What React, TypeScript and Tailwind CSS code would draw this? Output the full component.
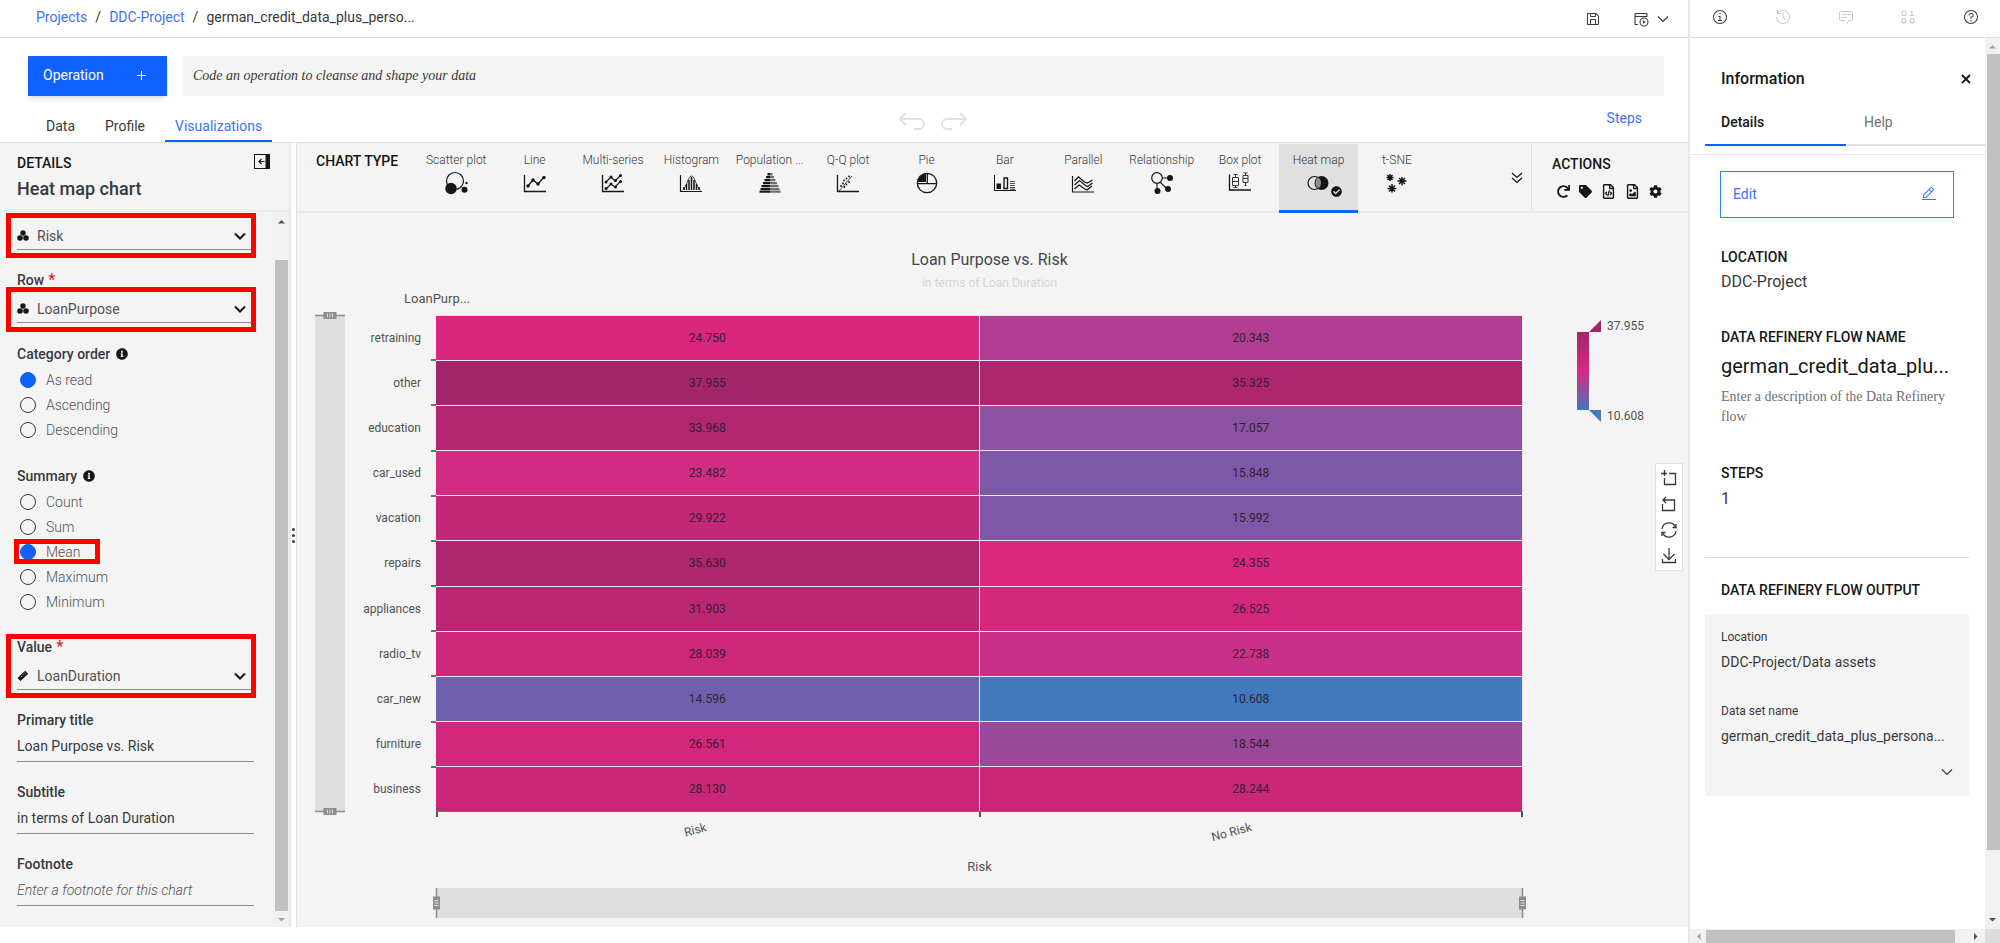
import React from "react";
import {
  FaCheckCircle,
  FaInfoCircle,
  FaRedo,
  FaTag,
  FaRegFileCode,
  FaRegFileImage,
  FaCog,
} from "react-icons/fa";

type Row = { name: string; values: [number, number] };

const rows: Row[] = [
  { name: "retraining", values: [24.75, 20.343] },
  { name: "other", values: [37.955, 35.325] },
  { name: "education", values: [33.968, 17.057] },
  { name: "car_used", values: [23.482, 15.848] },
  { name: "vacation", values: [29.922, 15.992] },
  { name: "repairs", values: [35.63, 24.355] },
  { name: "appliances", values: [31.903, 26.525] },
  { name: "radio_tv", values: [28.039, 22.738] },
  { name: "car_new", values: [14.596, 10.608] },
  { name: "furniture", values: [26.561, 18.544] },
  { name: "business", values: [28.13, 28.244] },
];

const MIN = 10.608;
const MAX = 37.955;
const stops = [
  [65, 120, 190],
  [219, 39, 128],
  [163, 38, 108],
];

function heat(v: number) {
  const t = ((v - MIN) / (MAX - MIN)) * 2;
  const i = t >= 1 ? 1 : 0;
  const f = t - i;
  const c = stops[i].map((a, k) => Math.round(a + (stops[i + 1][k] - a) * f));
  return `rgb(${c.join(",")})`;
}

/* ---------- Icons ---------- */

const Carbon = ({ size = 16, children }: { size?: number; children: React.ReactNode }) => (
  <svg width={size} height={size} viewBox="0 0 32 32" fill="currentColor" aria-hidden="true">
    {children}
  </svg>
);

const SaveIcon = () => (
  <Carbon>
    <path d="M27.71,9.29l-5-5A1,1,0,0,0,22,4H6A2,2,0,0,0,4,6V26a2,2,0,0,0,2,2H26a2,2,0,0,0,2-2V10A1,1,0,0,0,27.71,9.29ZM12,6h8v4H12Zm8,20H12V18h8Zm2,0V18a2,2,0,0,0-2-2H12a2,2,0,0,0-2,2v8H6V6h4v4a2,2,0,0,0,2,2h8a2,2,0,0,0,2-2V6.41l4,4V26Z" />
  </Carbon>
);

const JobIcon = () => (
  <svg width="16" height="16" viewBox="0 0 32 32" fill="none" stroke="currentColor" strokeWidth="2.2" aria-hidden="true">
    <path d="M28 12V6a1 1 0 0 0-1-1H5a1 1 0 0 0-1 1v20a1 1 0 0 0 1 1h5M4 11h24" />
    <circle cx="22" cy="22" r="8" />
    <path d="M20 18.5v7l5.5-3.5z" fill="currentColor" stroke="none" />
  </svg>
);

const InfoIcon = () => (
  <Carbon>
    <path d="M17 22V14H13v2h2v6H12v2h8V22zM16 8a1.5 1.5 0 1 0 1.5 1.5A1.5 1.5 0 0 0 16 8z" />
    <path d="M16 30A14 14 0 1 1 30 16 14 14 0 0 1 16 30Zm0-26A12 12 0 1 0 28 16 12 12 0 0 0 16 4Z" />
  </Carbon>
);

const HistoryIcon = () => (
  <Carbon>
    <path d="M20.59 22 15 16.41 15 7 17 7 17 15.58 22 20.59z" />
    <path d="M16,2A13.94,13.94,0,0,0,6,6.23V2H4v8h8V8H7.08A12,12,0,1,1,4,16H2A14,14,0,1,0,16,2Z" />
  </Carbon>
);

const CommentIcon = () => (
  <svg width="16" height="16" viewBox="0 0 32 32" fill="none" stroke="currentColor" strokeWidth="2" aria-hidden="true">
    <path d="M17.5 29.5 21 23h6a2 2 0 0 0 2-2V7a2 2 0 0 0-2-2H5a2 2 0 0 0-2 2v14a2 2 0 0 0 2 2h10M8 11h16M8 17h10" />
  </svg>
);

const DataIcon = () => (
  <svg width="16" height="16" viewBox="0 0 32 32" fill="none" stroke="currentColor" strokeWidth="2.2" aria-hidden="true">
    <rect x="4" y="4" width="8" height="9" rx="4" />
    <rect x="4" y="19" width="8" height="9" rx="4" />
    <rect x="20" y="19" width="8" height="9" rx="4" />
    <path d="M20 5h4v8M20 13h8" />
  </svg>
);

const HelpIcon = () => (
  <Carbon>
    <path d="M16,2A14,14,0,1,0,30,16,14,14,0,0,0,16,2Zm0,26A12,12,0,1,1,28,16,12,12,0,0,1,16,28Z" />
    <circle cx="16" cy="23.5" r="1.5" />
    <path d="M17,8H15.5A4.49,4.49,0,0,0,11,12.5V13h2v-.5A2.5,2.5,0,0,1,15.5,10H17a2.5,2.5,0,0,1,0,5H15v4.5h2V17a4.5,4.5,0,0,0,0-9Z" />
  </Carbon>
);

const EditIcon = () => (
  <Carbon>
    <path d="M2 26H30V28H2z" />
    <path d="M25.4,9c0.8-0.8,0.8-2,0-2.8l-3.6-3.6c-0.8-0.8-2-0.8-2.8,0L4,17.6V24h6.4L25.4,9z M20.4,4L24,7.6l-3,3L17.4,7L20.4,4z M6,22v-3.6l10-10l3.6,3.6l-10,10H6z" />
  </Carbon>
);

const Chevron = ({ bold = false }: { bold?: boolean }) => (
  <svg width="12" height="8" viewBox="0 0 12 8" fill="none" stroke="currentColor" strokeWidth={bold ? 2 : 1.2} aria-hidden="true">
    <path d="M1 1.5 6 6.5 11 1.5" />
  </svg>
);

const CollapseIcon = () => (
  <svg width="16" height="15" viewBox="0 0 16 15" fill="none" stroke="#161616" aria-hidden="true">
    <rect x=".5" y=".5" width="15" height="14" />
    <path d="M11.5 0h4v15h-4z" fill="#161616" stroke="none" />
    <path d="M10.5 7.5H5M7.5 5 5 7.5 7.5 10" strokeWidth="1.2" />
  </svg>
);

const BlobsIcon = () => (
  <svg width="12" height="11" viewBox="0 0 12 11" fill="#161616" aria-hidden="true">
    <circle cx="6" cy="3" r="2.7" />
    <circle cx="3" cy="8" r="2.8" />
    <circle cx="9" cy="8" r="2.8" />
  </svg>
);

const RulerIcon = () => (
  <svg width="12" height="12" viewBox="0 0 12 12" aria-hidden="true">
    <path d="M.5 8 8.2.8l3 3L3.5 11z" fill="#161616" />
    <path d="m4 6 1 1M5.8 4.3l1 1M7.6 2.6l1 1" stroke="#f4f4f4" strokeWidth=".7" />
  </svg>
);

const UndoIcon = () => (
  <svg width="26" height="18" viewBox="0 0 26 18" fill="none" stroke="currentColor" strokeWidth="1.8" aria-hidden="true">
    <path d="M7 1 1 7l6 6M1 7h19a5 5 0 0 1 0 10h-5" />
  </svg>
);

const RedoIcon = () => (
  <svg width="26" height="18" viewBox="0 0 26 18" fill="none" stroke="currentColor" strokeWidth="1.8" aria-hidden="true">
    <path d="m19 1 6 6-6 6M25 7H6a5 5 0 0 0 0 10h5" />
  </svg>
);

const K = "#161616";

const chartIcons: Record<string, React.ReactNode> = {
  "Scatter plot": (
    <>
      <circle cx="11" cy="10" r="8.5" fill="none" stroke={K} strokeWidth="1.2" />
      <circle cx="7" cy="17.5" r="5.7" fill={K} />
      <circle cx="20.5" cy="18.7" r="3" fill={K} />
      <circle cx="22.5" cy="12" r="1.2" fill={K} />
    </>
  ),
  Line: (
    <g fill="none" stroke={K}>
      <path d="M1.5 4v16.5H23" strokeWidth="1.3" />
      <path d="m5 15 5-6 5 4 6-7" strokeWidth="1.3" />
      <g fill={K} stroke="none">
        <circle cx="5" cy="15" r="1.7" />
        <circle cx="10" cy="9" r="1.7" />
        <circle cx="15" cy="13" r="1.7" />
        <circle cx="21" cy="6.5" r="1.7" />
      </g>
    </g>
  ),
  "Multi-series": (
    <g fill="none" stroke={K}>
      <path d="M1.5 4v16.5H23" strokeWidth="1.3" />
      <path d="m5 11 5-5 4 4 6-6M5 18l5-5 4 3 6-6" strokeWidth="1.2" />
      <g fill={K} stroke="none">
        <circle cx="5" cy="11" r="1.5" />
        <circle cx="10" cy="6" r="1.5" />
        <circle cx="14.5" cy="9.5" r="1.5" />
        <circle cx="19.5" cy="4.5" r="1.5" />
        <circle cx="5" cy="17.5" r="1.5" />
        <circle cx="10" cy="13" r="1.5" />
        <circle cx="14.5" cy="16" r="1.5" />
        <circle cx="19.5" cy="10.5" r="1.5" />
      </g>
    </g>
  ),
  Histogram: (
    <g fill="none" stroke={K}>
      <path d="M1.5 4v16.5H23" strokeWidth="1.2" />
      <path d="M5 19v-3M7.5 19v-6M10 19V9M12.5 19V6M15 19V9M17.5 19v-6M20 19v-3" strokeWidth="1.5" />
      <path d="M3.5 19C8 16 9 5 12.5 5S17 16 21.5 19" strokeWidth=".8" />
    </g>
  ),
  "Population ...": (
    <>
      <path d="M9.5 2H12v2.5H9.5zM8 5h4v2.3H8zM6.5 8H12v2.3H6.5zM5 11h7v2.3H5zM3.5 14H12v2.3H3.5zM2.5 17H12v2H2.5zM1.5 19.5H12v2.3H1.5z" fill={K} />
      <path d="M12 2h2.5v2.5H12zM12 5h4v2.3h-4zM12 8h5.5v2.3H12zM12 11h7v2.3h-7zM12 14h8.5v2.3H12zM12 17h9.5v2H12zM12 19.5h10.5v2.3H12z" fill="#6f6f6f" />
    </>
  ),
  "Q-Q plot": (
    <g fill="none" stroke={K}>
      <path d="M1.5 4v16.5H23" strokeWidth="1.3" />
      <path d="M3 20 16 5" strokeWidth=".8" />
      <g fill={K} stroke="none">
        <circle cx="5" cy="15" r=".9" />
        <circle cx="7" cy="12.5" r=".9" />
        <circle cx="8" cy="9.5" r=".9" />
        <circle cx="10.5" cy="7.5" r=".9" />
        <circle cx="13" cy="5.5" r=".9" />
        <circle cx="8.5" cy="16" r=".9" />
        <circle cx="10.5" cy="13.5" r=".9" />
        <circle cx="13" cy="11" r=".9" />
      </g>
    </g>
  ),
  Pie: (
    <>
      <circle cx="12" cy="12" r="9.7" fill="none" stroke={K} strokeWidth="1.3" />
      <path d="M11 11H2.5A9.5 9.5 0 0 1 11 2.5z" fill={K} />
      <path d="M12.3 2.5V13M2 12.7h20" stroke={K} strokeWidth="1.3" />
    </>
  ),
  Bar: (
    <>
      <path d="M1.5 4v15.5H23" fill="none" stroke={K} />
      <path d="M3.5 12.5H8V18H3.5z" fill={K} />
      <path d="M11 7h3.5v10.5H11z" fill="none" stroke={K} strokeWidth="1.4" />
      <path d="M17 10.5h5M17 12.5h5M17 14.5h5M17 16.5h5M17 18.2h5" stroke="#525252" strokeWidth="1.2" />
    </>
  ),
  Parallel: (
    <g fill="none" stroke={K}>
      <path d="M1.5 5v16H23" strokeWidth="1.2" />
      <path d="m3.5 10 4-4 6 5 3 1 5-3M3.5 14l5-4.5 6 5 2 1 5-3.5M3.5 18 8 14l6 4 2 1 5-4" strokeWidth="1.3" />
    </g>
  ),
  Relationship: (
    <>
      <path d="M11 7h8M10 11l7 7M7 12v8" stroke={K} strokeWidth="1.1" />
      <circle cx="7" cy="7" r="5.3" fill="#f4f4f4" stroke={K} strokeWidth="1.2" />
      <circle cx="20" cy="7" r="3" fill={K} />
      <circle cx="18" cy="18" r="3" fill={K} />
      <circle cx="7.5" cy="20" r="3" fill={K} />
    </>
  ),
  "Box plot": (
    <g fill="none" stroke="#393939">
      <path d="M1.5 3.5v15.5H23" strokeWidth="1.3" stroke={K} />
      <path d="M4.5 6.5h6v8h-6zM4.5 10.5h6M7.5 3.5v3M7.5 14.5v2M5.5 3.5h4M5.5 16.5h4" />
      <path d="M15 4.5h5v7h-5zM15 7.5h5M17.5 2v2.5M17.5 11.5v3M15.5 2h4M16.5 14.5h2" />
    </g>
  ),
  "Heat map": (
    <>
      <circle cx="8.5" cy="12" r="6.5" fill="none" stroke={K} strokeWidth="1.2" />
      <circle cx="15.5" cy="12" r="7" fill={K} />
      <path d="M12 6.5a6.5 6.5 0 0 1 0 11 7 7 0 0 1 0-11z" fill="#8d8d8d" />
    </>
  ),
  "t-SNE": (
    <g stroke={K} strokeWidth="1.5" fill={K}>
      <path d="M5 3v7M1.5 6.5h7M2.5 4l5 5M7.5 4l-5 5M17 6v8.5M12.5 10h9M14 7l6 6M20 7l-6 6M7 13v8.5M2.5 17.5h9M4 14.5l6 6M10 14.5l-6 6" />
    </g>
  ),
};

/* ---------- Left panel ---------- */

const Heading = ({ children, required, info, htmlFor }: { children: React.ReactNode; required?: boolean; info?: boolean; htmlFor?: string }) => {
  const inner = (
    <>
      {children}
      {required && <span className="text-base leading-5 text-[#da1e28]">*</span>}
      {info && <FaInfoCircle size={12} className="ml-0.5 text-[#161616]" />}
    </>
  );
  const cls = "flex h-5 items-center gap-1 text-sm font-medium text-[#343a3f]";
  return htmlFor ? <label htmlFor={htmlFor} className={cls}>{inner}</label> : <legend className={cls}>{inner}</legend>;
};

const Select = ({ id, value, icon, label }: { id: string; value: string; icon: React.ReactNode; label?: string }) => (
  <div className="relative border-b border-[#8d8d8d]">
    <span className="absolute top-4 left-0">{icon}</span>
    <select id={id} aria-label={label} className="block h-[35px] w-full appearance-none bg-transparent pt-2 pl-5 text-sm text-[#525252] outline-none">
      <option>{value}</option>
    </select>
    <span className="pointer-events-none absolute top-[18px] right-2 text-[#161616]">
      <Chevron bold />
    </span>
  </div>
);

const Mark = ({ className }: { className: string }) => (
  <div aria-hidden="true" className={"pointer-events-none absolute border-[5px] border-[#ff0000] " + className} />
);

const Radios = ({ name, options, selected, marked }: { name: string; options: string[]; selected: string; marked?: string }) => (
  <div className="mt-[3px]">
    {options.map((o) => (
      <label key={o} className="relative flex h-[25px] items-center gap-[10px] pl-[3px] text-sm font-light text-[#525252]">
        <input
          type="radio"
          name={name}
          defaultChecked={o === selected}
          className="size-4 appearance-none rounded-full border border-[#393939] checked:border-[#0f62fe] checked:bg-[#0f62fe]"
        />
        {o}
        {o === marked && <Mark className="-left-[3px] h-[25px] w-[86px]" />}
      </label>
    ))}
  </div>
);

const Field = ({ id, label, value, placeholder }: { id: string; label: string; value?: string; placeholder?: string }) => (
  <div className="mt-5">
    <Heading htmlFor={id}>{label}</Heading>
    <input
      id={id}
      defaultValue={value}
      placeholder={placeholder}
      className="block h-8 w-full border-b border-[#8d8d8d] bg-transparent text-sm text-[#343a3f] outline-none placeholder:font-light placeholder:text-[#525252] placeholder:italic"
    />
  </div>
);

const Arrow = ({ d, color }: { d: string; color: string }) => (
  <svg width="7" height="7" viewBox="0 0 7 7" fill={color} aria-hidden="true">
    <path d={d} />
  </svg>
);
const UP = "M0 5.5 3.5 2 7 5.5z";
const DOWN = "M0 2 3.5 5.5 7 2z";
const LEFT = "M5.5 0 2 3.5 5.5 7z";
const RIGHT = "M2 0 5.5 3.5 2 7z";

const DetailsPanel = () => (
  <section className="flex w-[291px] shrink-0 flex-col border-r-2 border-[#e8e8e8] bg-[#f4f4f4]">
    <header className="flex h-[69px] shrink-0 justify-between border-b-2 border-[#e8e8e8] pt-2.5 pr-[19px] pl-[17px]">
      <div>
        <h2 className="text-sm leading-5 font-medium text-[#161616]">DETAILS</h2>
        <h3 className="mt-1 text-lg leading-6 font-medium text-[#343a3f]">Heat map chart</h3>
      </div>
      <button type="button" aria-label="Collapse panel" className="mt-px self-start">
        <CollapseIcon />
      </button>
    </header>
    <div className="flex min-h-0 flex-1">
      <form className="min-w-0 flex-1 overflow-hidden pt-0.5 pr-[19px] pl-[17px]">
        <div className="relative">
          <Select id="column" label="Column" value="Risk" icon={<BlobsIcon />} />
          <Mark className="-top-[1px] -right-[2px] -bottom-[8px] -left-[11px]" />
        </div>
        <div className="mt-5">
          <Heading required htmlFor="row">Row</Heading>
          <div className="relative -mt-[3px]">
            <Select id="row" value="LoanPurpose" icon={<BlobsIcon />} />
            <Mark className="top-0 -right-[2px] -bottom-[9px] -left-[11px]" />
          </div>
        </div>
        <fieldset className="mt-[21px]">
          <Heading info>Category order</Heading>
          <Radios name="order" options={["As read", "Ascending", "Descending"]} selected="As read" />
        </fieldset>
        <fieldset className="mt-6">
          <Heading info>Summary</Heading>
          <Radios name="summary" options={["Count", "Sum", "Mean", "Maximum", "Minimum"]} selected="Mean" marked="Mean" />
        </fieldset>
        <div className="relative mt-[23px]">
          <Heading required htmlFor="value">Value</Heading>
          <div className="-mt-[3px]">
            <Select id="value" value="LoanDuration" icon={<RulerIcon />} />
          </div>
          <Mark className="-top-[3px] -right-[2px] -bottom-[8px] -left-[11px]" />
        </div>
        <Field id="title" label="Primary title" value="Loan Purpose vs. Risk" />
        <Field id="subtitle" label="Subtitle" value="in terms of Loan Duration" />
        <Field id="footnote" label="Footnote" placeholder="Enter a footnote for this chart" />
      </form>
      <div className="flex w-4 flex-col items-center bg-[#f1f1f1]" aria-hidden="true">
        <div className="flex h-12 flex-col pt-[6px]">
          <Arrow d={UP} color="#505050" />
        </div>
        <div className="w-[13px] flex-1 bg-[#c1c1c1]" />
        <div className="flex h-4 items-center">
          <Arrow d={DOWN} color="#a3a3a3" />
        </div>
      </div>
    </div>
  </section>
);

/* ---------- Chart ---------- */

const ChartTypes = () => (
  <div className="flex h-[69px] shrink-0 border-b-2 border-[#e8e8e8]">
    <h2 className="w-[120px] shrink-0 pt-[9px] pl-[19px] text-sm leading-4 font-medium text-[#161616]">CHART TYPE</h2>
    <div className="flex min-w-0 flex-1">
      {Object.keys(chartIcons).map((name) => (
        <button
          key={name}
          type="button"
          className={
            "relative flex flex-1 basis-0 flex-col items-center border-b-[3px] pt-2 " +
            (name === "Heat map" ? "-mb-0.5 border-[#0f62fe] bg-[#e0e0e0]" : "border-transparent")
          }
        >
          <span className="text-xs leading-4 font-light whitespace-nowrap text-[#393939]">{name}</span>
          <svg width="24" height="24" viewBox="0 0 24 24" className="mt-[3px]" aria-hidden="true">
            {chartIcons[name]}
          </svg>
          {name === "Heat map" && <FaCheckCircle size={11} className="absolute right-4 bottom-[13px] text-[#161616]" />}
        </button>
      ))}
    </div>
    <button type="button" aria-label="More chart types" className="flex w-[95px] items-center justify-end pr-2 text-[#161616]">
      <svg width="12" height="12" viewBox="0 0 12 12" fill="none" stroke="currentColor" strokeWidth="1.2" aria-hidden="true">
        <path d="m1 1 5 4.5L11 1M1 6l5 4.5L11 6" />
      </svg>
    </button>
    <div className="w-[157px] shrink-0 border-l border-[#e0e0e0] pt-3 pl-5">
      <h2 className="text-sm leading-4 font-medium text-[#161616]">ACTIONS</h2>
      <div className="mt-3 ml-[5px] flex items-center gap-[9px] text-[#161616]">
        <button type="button" aria-label="Reset"><FaRedo size={13} /></button>
        <button type="button" aria-label="Tag"><FaTag size={13} /></button>
        <button type="button" aria-label="Export code"><FaRegFileCode size={15} /></button>
        <button type="button" aria-label="Export image"><FaRegFileImage size={15} /></button>
        <button type="button" aria-label="Settings"><FaCog size={13} /></button>
      </div>
    </div>
  </div>
);

const HandleH = () => (
  <svg width="30" height="7" viewBox="0 0 30 7" aria-hidden="true">
    <path d="M0 3.5h30" stroke="#8d8d8d" strokeWidth="1.5" />
    <path d="M8.5 0h13v7h-13z" fill="#8d8d8d" />
    <path d="M12.5 1.5v4M15 1.5v4M17.5 1.5v4" stroke="#dedede" />
  </svg>
);

const HandleV = () => (
  <svg width="7" height="30" viewBox="0 0 7 30" aria-hidden="true">
    <path d="M3.5 0v30" stroke="#8d8d8d" strokeWidth="1.5" />
    <path d="M0 8.5h7v13H0z" fill="#8d8d8d" />
    <path d="M1.5 12.5h4M1.5 15h4M1.5 17.5h4" stroke="#dedede" />
  </svg>
);

const ToolBox = () => (
  <div className="flex w-7 flex-col items-center gap-[10px] border border-[#e0e0e0] bg-white py-1.5 text-[#393939]">
    <button type="button" aria-label="Zoom area">
      <svg width="16" height="16" viewBox="0 0 16 16" fill="none" stroke="currentColor" strokeWidth="1.3" aria-hidden="true">
        <path d="M0 3.5h6M3.5 0v6M8 3.5h6.5v11h-11V8" />
      </svg>
    </button>
    <button type="button" aria-label="Restore zoom">
      <svg width="16" height="16" viewBox="0 0 16 16" fill="none" stroke="currentColor" strokeWidth="1.3" aria-hidden="true">
        <path d="M5 1 2 4l3 3M2 4h11.5v10.5h-12V8" />
      </svg>
    </button>
    <button type="button" aria-label="Refresh">
      <svg width="16" height="16" viewBox="0 0 16 16" fill="none" stroke="currentColor" strokeWidth="1.3" aria-hidden="true">
        <path d="M1 7a7 7 0 0 1 13.5-1.5M15 9A7 7 0 0 1 1.5 10.5" />
        <path d="M11.5 5.5h3.5V2M4.5 10.5H1V14" />
      </svg>
    </button>
    <button type="button" aria-label="Download">
      <svg width="16" height="16" viewBox="0 0 16 16" fill="none" stroke="currentColor" strokeWidth="1.3" aria-hidden="true">
        <path d="M8 0v11M2.5 6 8 11.5 13.5 6M1.5 11v3.5h13V11" />
      </svg>
    </button>
  </div>
);

const HeatMap = () => (
  <div className="flex min-h-0 flex-1 flex-col pt-[35px] pb-[9px] text-xs text-[#525252]">
    <h2 className="pr-1.5 text-center text-base leading-6 text-[#464646]">Loan Purpose vs. Risk</h2>
    <p className="mt-[3px] pr-1.5 text-center text-xs leading-4 text-[#d5d5d5]">in terms of Loan Duration</p>
    <p className="pl-[107px] text-[13px] leading-4">LoanPurp...</p>

    <div className="mt-2 flex min-h-0 flex-1">
      <div className="ml-[18px] flex w-[30px] flex-col justify-between bg-[#dfdfdf]">
        <div className="-mt-[3px]"><HandleH /></div>
        <div className="-mb-[3px]"><HandleH /></div>
      </div>
      <div className="grid w-[91px] auto-rows-fr">
        {rows.map((r, i) => (
          <div key={r.name} className="relative flex items-center justify-end pr-[15px]">
            {r.name}
            {i < rows.length - 1 && <i className="absolute right-0 -bottom-px h-0.5 w-[5px] bg-[#6f6f6f]" />}
          </div>
        ))}
      </div>
      <div className="grid min-w-0 flex-1 auto-rows-fr grid-cols-2 border-b border-[#6f6f6f]">
        {rows.flatMap((r) =>
          r.values.map((v, i) => (
            <div
              key={r.name + i}
              className="flex items-center justify-center border-t border-r border-[#e8e8e8]"
              style={{ backgroundColor: heat(v) }}
            >
              <span className="text-[#35202f]">{v.toFixed(3)}</span>
            </div>
          )),
        )}
      </div>
      <div className="flex w-[165px] flex-col pt-[5px] pr-[5px]">
        <div className="flex pl-[54px]">
          <svg width="24" height="102" viewBox="0 0 24 102" aria-hidden="true">
            <defs>
              <linearGradient id="scale" x1="0" y1="0" x2="0" y2="1">
                <stop offset="0" stopColor="#a3266c" />
                <stop offset=".5" stopColor="#db2780" />
                <stop offset="1" stopColor="#4178be" />
              </linearGradient>
            </defs>
            <path d="M0 12h12v78H0z" fill="url(#scale)" />
            <path d="M12 12 24 0v12z" fill="#a3266c" />
            <path d="M12 90h12v12z" fill="#4178be" />
          </svg>
          <div className="flex flex-col justify-between pl-1.5 leading-3">
            <span>37.955</span>
            <span>10.608</span>
          </div>
        </div>
        <div className="mt-[41px] self-end">
          <ToolBox />
        </div>
      </div>
    </div>

    <div className="mr-[165px] ml-[139px] flex shrink-0 flex-col">
      <div className="flex h-[5px] justify-between" aria-hidden="true">
        <i className="w-0.5 bg-[#525252]" />
        <i className="w-0.5 bg-[#525252]" />
        <i className="w-0.5 bg-[#525252]" />
      </div>
      <div className="flex h-[41px]">
        <div className="flex flex-1 items-start justify-center pt-[5px]">
          <span className="mr-6 -rotate-[15deg]">Risk</span>
        </div>
        <div className="flex flex-1 items-start justify-center pt-[7px]">
          <span className="mr-10 -rotate-[15deg]">No Risk</span>
        </div>
      </div>
      <p className="text-center text-[13px] leading-[18px]">Risk</p>
      <div className="mt-3 flex h-[30px] justify-between bg-[#dfdfdf]">
        <div className="-ml-[3px]"><HandleV /></div>
        <div className="-mr-[3px]"><HandleV /></div>
      </div>
    </div>
  </div>
);

/* ---------- Right panel ---------- */

const Section = ({ title, className, children }: { title: string; className: string; children?: React.ReactNode }) => (
  <section className={"pr-[31px] pl-[31px] " + className}>
    <h3 className="text-sm leading-5 font-medium whitespace-nowrap text-[#161616]">{title}</h3>
    {children}
  </section>
);

const InfoPanel = () => (
  <aside className="flex w-[312px] shrink-0 flex-col border-l-2 border-[#e8e8e8] bg-white">
    <div className="flex h-[38px] shrink-0 items-center justify-between border-b border-[#e0e0e0] pr-[21px] pb-[3px] pl-[22px]">
      <button type="button" aria-label="Information" className="text-[#393939]"><InfoIcon /></button>
      <button type="button" aria-label="History" disabled className="text-[#c6c6c6]"><HistoryIcon /></button>
      <button type="button" aria-label="Comments" disabled className="text-[#c6c6c6]"><CommentIcon /></button>
      <button type="button" aria-label="Data" disabled className="text-[#c6c6c6]"><DataIcon /></button>
      <button type="button" aria-label="Help" className="text-[#393939]"><HelpIcon /></button>
    </div>
    <div className="flex min-h-0 flex-1">
      <div className="min-w-0 flex-1 overflow-hidden">
        <div className="flex items-center justify-between pt-[29px] pr-3.5 pl-[31px]">
          <h2 className="text-base leading-6 font-medium text-[#161616]">Information</h2>
          <button type="button" aria-label="Close" className="text-[#161616]">
            <svg width="10" height="10" viewBox="0 0 10 10" stroke="currentColor" strokeWidth="1.8" aria-hidden="true">
              <path d="m1 1 8 8M9 1 1 9" />
            </svg>
          </button>
        </div>
        <div className="flex gap-0.5 border-b border-[#e8e8e8] pt-[21px] pb-2 pl-[15px] text-sm leading-5">
          <button type="button" className="w-[141px] border-b-2 border-[#0f62fe] pb-3 pl-4 text-left font-medium text-[#161616]">Details</button>
          <button type="button" className="flex-1 border-b-2 border-[#e0e0e0] pb-3 pl-4 text-left text-[#6f6f6f]">Help</button>
        </div>
        <div className="pt-4 pr-[31px] pl-[30px]">
          <button type="button" className="flex h-[47px] w-full items-center justify-between border border-[#3d7afe] pr-4 pb-0.5 pl-3 text-sm text-[#3d70ff]">
            Edit
            <EditIcon />
          </button>
        </div>
        <Section title="LOCATION" className="pt-[29px]">
          <p className="mt-[3px] text-base leading-6 text-[#393939]">DDC-Project</p>
        </Section>
        <Section title="DATA REFINERY FLOW NAME" className="pt-[33px]">
          <p className="mt-[5px] text-xl leading-7 whitespace-nowrap text-[#161616]">german_credit_data_plu...</p>
          <p className="mt-[7px] font-['Liberation_Serif',serif] text-sm leading-5 text-[#6f6f6f]">
            Enter a description of the Data Refinery flow
          </p>
        </Section>
        <Section title="STEPS" className="pt-9">
          <p className="mt-1 text-base leading-6 text-[#393939]">1</p>
        </Section>
        <hr className="mt-[46px] mr-4 ml-[15px] border-[#e0e0e0]" />
        <Section title="DATA REFINERY FLOW OUTPUT" className="pt-[22px]" />
        <div className="mt-3.5 mr-4 ml-[15px] bg-[#f4f4f4] px-4 pt-[13px] pb-2 text-[#393939]">
          <p className="text-xs leading-5">Location</p>
          <p className="mt-[5px] text-sm leading-5">DDC-Project/Data assets</p>
          <p className="mt-[29px] text-xs leading-5">Data set name</p>
          <p className="mt-[5px] text-sm leading-5 whitespace-nowrap">german_credit_data_plus_persona...</p>
          <div className="mt-2.5 flex h-8 items-center justify-end">
            <button type="button" aria-label="Show more"><Chevron /></button>
          </div>
        </div>
      </div>
      <div className="flex w-[15px] flex-col items-end bg-[#f1f1f1]" aria-hidden="true">
        <div className="flex h-4 items-center pr-1"><Arrow d={UP} color="#a3a3a3" /></div>
        <div className="w-[13px] flex-1 bg-[#c1c1c1]" />
        <div className="flex h-[79px] items-end pr-1 pb-1.5"><Arrow d={DOWN} color="#505050" /></div>
      </div>
    </div>
    <div className="flex h-3.5 shrink-0 items-center bg-[#f1f1f1]" aria-hidden="true">
      <div className="flex w-4 justify-center"><Arrow d={LEFT} color="#a3a3a3" /></div>
      <div className="h-[13px] flex-1 bg-[#c1c1c1]" />
      <div className="flex w-[30px] justify-end pr-1.5"><Arrow d={RIGHT} color="#505050" /></div>
      <div className="h-full w-[15px] bg-[#dcdcdc]" />
    </div>
  </aside>
);

/* ---------- Page ---------- */

export default function App() {
  return (
    <div className="flex h-screen min-h-[900px] overflow-hidden bg-white font-['Roboto','Liberation_Sans',sans-serif] text-sm text-[#393939]">
      <main className="flex min-w-0 flex-1 flex-col pb-4">
        <header className="flex h-[38px] shrink-0 items-center justify-between border-b border-[#e0e0e0] pr-[19px] pb-1 pl-9">
          <nav aria-label="Breadcrumb" className="flex gap-2 text-sm leading-5">
            <a href="#projects" className="text-[#3d70ff]">Projects</a>
            <span>/</span>
            <a href="#ddc" className="text-[#3d70ff]">DDC-Project</a>
            <span>/</span>
            <span>german_credit_data_plus_perso...</span>
          </nav>
          <div className="flex items-center pt-1">
            <button type="button" aria-label="Save"><SaveIcon /></button>
            <button type="button" aria-label="Jobs" className="ml-8 flex items-center gap-2">
              <JobIcon />
              <Chevron />
            </button>
          </div>
        </header>

        <div className="flex shrink-0 gap-4 pt-[18px] pr-6 pl-7">
          <button type="button" className="flex h-10 w-[139px] items-center justify-between bg-[#0f62fe] pr-[21px] pb-0.5 pl-[15px] text-sm text-white shadow-md">
            Operation
            <svg width="9" height="9" viewBox="0 0 9 9" stroke="currentColor" aria-hidden="true">
              <path d="M4.5 0v9M0 4.5h9" />
            </svg>
          </button>
          <input
            aria-label="Code an operation"
            placeholder="Code an operation to cleanse and shape your data"
            className="h-10 min-w-0 flex-1 bg-[#f4f4f4] px-2.5 font-['Liberation_Serif',serif] text-sm italic outline-none placeholder:text-[#393939]"
          />
        </div>

        <div className="flex h-[47px] shrink-0 items-end justify-between border-b border-[#e0e0e0] pr-[46px] pl-[31px]">
          <nav className="flex text-sm leading-5" aria-label="Views">
            <a href="#data" className="px-[15px] pb-1.5">Data</a>
            <a href="#profile" className="px-[15px] pb-1.5">Profile</a>
            <a href="#visualizations" className="ml-[5px] border-b-2 border-[#0f62fe] px-2.5 pb-1 text-[#3d70ff]">Visualizations</a>
          </nav>
          <div className="mr-3 flex gap-4 pb-3 text-[#e0e0e0]">
            <button type="button" aria-label="Undo"><UndoIcon /></button>
            <button type="button" aria-label="Redo"><RedoIcon /></button>
          </div>
          <a href="#steps" className="pb-3.5 text-sm leading-5 text-[#3d70ff]">Steps</a>
        </div>

        <div className="flex min-h-0 flex-1">
          <DetailsPanel />
          <div className="flex w-[5px] shrink-0 flex-col items-center justify-center gap-[3px]" aria-hidden="true">
            <i className="size-[3px] rounded-full bg-[#393939]" />
            <i className="size-[3px] rounded-full bg-[#393939]" />
            <i className="size-[3px] rounded-full bg-[#393939]" />
          </div>
          <section className="flex min-w-0 flex-1 flex-col border-l border-[#e0e0e0] bg-[#f4f4f4] pt-px">
            <ChartTypes />
            <HeatMap />
          </section>
        </div>
      </main>
      <InfoPanel />
    </div>
  );
}
